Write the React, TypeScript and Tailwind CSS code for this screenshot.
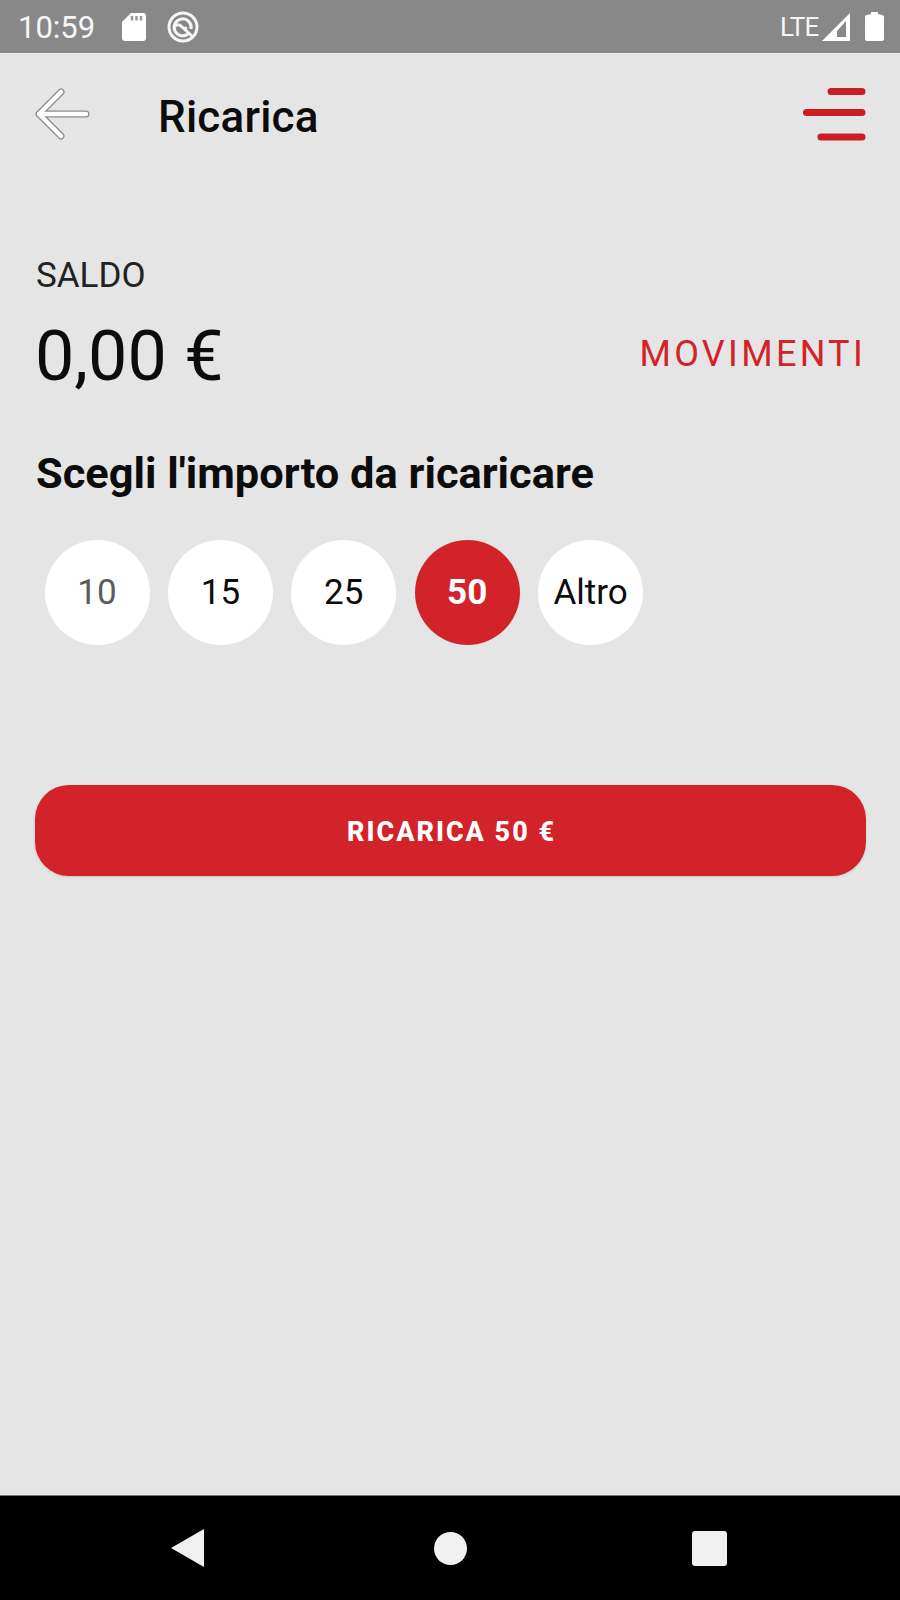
import { useState } from "react";
import clsx from "clsx";

const amounts = ["10", "15", "25", "50", "Altro"];

function StatusBar() {
  return (
    <div className="flex h-[53px] items-center justify-between bg-[#888888] text-[#f6f6f6]">
      <div className="flex items-center">
        <span className="ml-[18px] w-[103px] pt-[3px] text-[31px] leading-[50px]">10:59</span>
        {/* SD card */}
        <svg width="26" height="30" viewBox="0 0 26 30" className="mt-px">
          <path d="M10 1H22Q25 1 25 4V26Q25 29 22 29H4Q1 29 1 26V10Z" fill="#fff" />
          <path d="M11 4V8.500M15.500 4V8.500M20 4V8.500" stroke="#999" strokeWidth="2.500" />
        </svg>
        {/* Sync badge */}
        <svg width="32" height="32" viewBox="0 0 32 32" fill="none" stroke="#f6f6f6" className="ml-5">
          <circle cx="16" cy="16" r="14" strokeWidth="3" />
          <path d="M22 22A8.500 8.500 0 1 1 24 18" strokeWidth="3" />
          <path d="M8 15Q12 12 15 16Q17 18 20 17M15 16L25 25" strokeWidth="3" />
        </svg>
      </div>
      <div className="flex items-center">
        <span className="w-[42px] text-[26px] leading-[50px] tracking-[-0.8px]">LTE</span>
        <svg width="28" height="30" viewBox="0 0 28 30">
          <path d="M28 1V29H0Z" fill="#fff" />
          <path d="M24 9V25H15V19Z" fill="#888" />
        </svg>
        <svg width="19" height="30" viewBox="0 0 19 30" className="mr-4 ml-[15px]">
          <path d="M6 0H13V2L17 3Q19 3 19 5V27Q19 29 17 29H2Q0 29 0 27V5Q0 3 2 3L6 2Z" fill="#fff" />
        </svg>
      </div>
    </div>
  );
}

function Header() {
  return (
    <header className="flex h-[127px] items-center border-t border-[#eeeeee] pr-[34px] pb-1.5 pl-[34px]">
      <button aria-label="Indietro">
        <svg width="56" height="54" viewBox="0 0 56 54" fill="none" strokeLinecap="round" strokeLinejoin="round">
          <path d="M27 5L5 27L27 49M5 27H52" stroke="#8c8c8c" strokeWidth="7" />
          <path d="M27 5L5 27L27 49M5 27H52" stroke="#fff" strokeWidth="4.500" />
        </svg>
      </button>
      <h1 className="mt-1.5 ml-[68px] text-[44px] leading-[50px] font-medium tracking-[0.2px]">Ricarica</h1>
      <button aria-label="Menu" className="ml-auto">
        <svg width="64" height="56" viewBox="0 0 64 56" stroke="#cd1d24" strokeWidth="7" strokeLinecap="round">
          <path d="M29 5.500H60M4.500 26.500H60M19 51H60" />
        </svg>
      </button>
    </header>
  );
}

function NavBar() {
  return (
    <nav className="flex h-[105px] items-center border-t border-[#777777] bg-black">
      <svg width="33" height="38" viewBox="0 0 33 38" className="ml-[171px]">
        <path d="M33 0V38L0 19Z" fill="#f0f0f0" />
      </svg>
      <div className="ml-[230px] size-[33px] rounded-full bg-[#f0f0f0]" />
      <div className="ml-[225px] size-[35px] rounded-[3px] bg-[#f0f0f0]" />
    </nav>
  );
}

export default function App() {
  const [selected, setSelected] = useState("50");

  return (
    <div className="flex h-[1600px] w-[900px] flex-col bg-[#e5e5e5] font-['Roboto',sans-serif] text-[#0c0c0c]">
      <StatusBar />
      <Header />

      <main className="flex-1 px-[35px]">
        <p className="mt-[71px] pl-px text-[35px] leading-[50px] text-[#222222]">SALDO</p>
        <div className="mt-px flex items-center justify-between">
          <p className="text-[70px] leading-[108px]">0,00 €</p>
          <button className="-mt-1 -mr-px text-[36px] tracking-[3.3px] text-[#d2232a]">MOVIMENTI</button>
        </div>

        <h2 className="mt-[39px] pl-px text-[43.400px] leading-[50px] font-bold">
          Scegli l'importo da ricaricare
        </h2>
        <div className="mt-[41px] flex gap-[18.4px] pl-[9.500px]">
          {amounts.map((amount) => (
            <button
              key={amount}
              onClick={() => setSelected(amount)}
              className={clsx(
                "flex size-[105px] items-center justify-center rounded-full pt-px text-[35px]",
                selected === amount ? "bg-[#d2232a] font-bold text-white" : "bg-white",
                amount === "10" && selected !== amount && "text-[#5c5c5c]"
              )}
            >
              {amount}
            </button>
          ))}
        </div>

        <button className="mt-[140px] h-[91px] w-[831px] rounded-[34px] bg-[#d2232a] pt-[4px] pl-0.5 text-[27px] font-extrabold tracking-[2px] text-white shadow-sm">
          RICARICA 50 €
        </button>
      </main>

      <NavBar />
    </div>
  );
}
